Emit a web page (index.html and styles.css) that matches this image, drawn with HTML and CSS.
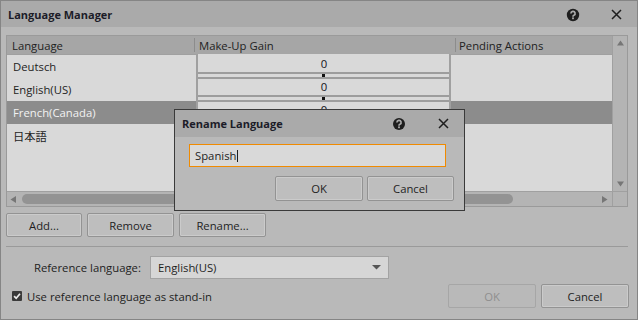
FILE: index.html
```html
<!DOCTYPE html>
<html>
<head>
<meta charset="utf-8">
<link rel="stylesheet" href="styles.css">
</head>
<body>
<div class="window">
  <div class="titlebar">
    <span class="title">Language Manager</span>
    <svg class="ico-help" width="14" height="14" viewBox="0 0 14 14"><circle cx="7" cy="7" r="6.2" fill="#1e1e1e"/><path d="M4.9 5.4a2.1 2.1 0 1 1 3 1.9c-.7.3-.9.7-.9 1.4" stroke="#aaaaaa" stroke-width="1.7" fill="none"/><rect x="6.1" y="9.4" width="1.8" height="1.8" fill="#aaaaaa"/></svg>
    <svg class="ico-close" width="11" height="11" viewBox="0 0 11 11"><path d="M1 1L10 10M10 1L1 10" stroke="#1e1e1e" stroke-width="1.5"/></svg>
  </div>
  <div class="content">
    <div class="frame">
      <div class="main">
        <div class="thead">
          <div class="th th1">Language</div>
          <div class="vsep"></div>
          <div class="th th2">Make-Up Gain</div>
          <div class="vsep"></div>
          <div class="th th3">Pending Actions</div>
        </div>
        <div class="tbody">
          <div class="col col1">
            <div class="row">Deutsch</div>
            <div class="row">English(US)</div>
            <div class="row sel">French(Canada)</div>
            <div class="row">日本語</div>
          </div>
          <div class="col col2">
            <div class="gain"><div class="gain-val">0</div><div class="gain-track"><div class="handle"></div></div></div>
            <div class="gain"><div class="gain-val">0</div><div class="gain-track"><div class="handle"></div></div></div>
            <div class="gain"><div class="gain-val">0</div><div class="gain-track"><div class="handle"></div></div></div>
            <div class="gain"><div class="gain-val">0</div><div class="gain-track"><div class="handle"></div></div></div>
          </div>
          <div class="col col3">
            <div class="row"></div>
            <div class="row"></div>
            <div class="row sel"></div>
            <div class="row"></div>
          </div>
        </div>
      </div>
      <div class="vscroll">
        <svg width="7" height="6" viewBox="0 0 7 6"><path d="M3.5 0.5L7 5.5H0Z" fill="#767676"/></svg>
        <svg width="7" height="6" viewBox="0 0 7 6"><path d="M0 0.5H7L3.5 5.5Z" fill="#767676"/></svg>
      </div>
      <div class="hscroll">
        <svg width="7" height="7" viewBox="0 0 7 7"><path d="M0.5 3.5L6 0V7Z" fill="#767676"/></svg>
        <div class="thumb"></div>
        <svg class="rarrow" width="7" height="7" viewBox="0 0 7 7"><path d="M6.5 3.5L1 0V7Z" fill="#767676"/></svg>
      </div>
      <div class="corner"></div>
    </div>
    <div class="btnrow">
      <div class="btn w76">Add...</div>
      <div class="btn w87">Remove</div>
      <div class="btn w87">Rename...</div>
    </div>
    <div class="hr"></div>
    <div class="refrow">
      <div class="reflabel">Reference language:</div>
      <div class="combo"><span>English(US)</span><svg width="9" height="5" viewBox="0 0 9 5"><path d="M0 0H9L4.5 4.5Z" fill="#555"/></svg></div>
    </div>
    <div class="botrow">
      <div class="chk">
        <svg class="chkbox" width="10" height="10" viewBox="0 0 10 10"><rect width="10" height="10" rx="1" fill="#3a3a3a"/><path d="M2.1 5.1L4.2 7.3 8 2.7" stroke="#ececec" stroke-width="1.7" fill="none"/></svg>
        <span>Use reference language as stand-in</span>
      </div>
      <div class="spacer"></div>
      <div class="btn w88 disabled">OK</div>
      <div class="btn w88">Cancel</div>
    </div>
  </div>

  <div class="dialog">
    <div class="dtitle">
      <span class="title">Rename Language</span>
      <svg class="ico-help" width="14" height="14" viewBox="0 0 14 14"><circle cx="7" cy="7" r="6" fill="#1e1e1e"/><path d="M4.9 5.4a2.1 2.1 0 1 1 3 1.9c-.7.3-.9.7-.9 1.4" stroke="#aaaaaa" stroke-width="1.7" fill="none"/><rect x="6.1" y="9.4" width="1.8" height="1.8" fill="#aaaaaa"/></svg>
      <svg class="ico-close" width="11" height="11" viewBox="0 0 11 11"><path d="M1 1L10 10M10 1L1 10" stroke="#1e1e1e" stroke-width="1.5"/></svg>
    </div>
    <div class="dbody">
      <div class="input"><span>Spanish</span><span class="caret"></span></div>
      <div class="dbtns">
        <div class="btn w88 h25">OK</div>
        <div class="btn w87 h25">Cancel</div>
      </div>
    </div>
  </div>
</div>
</body>
</html>
```
FILE: styles.css
```css
* { box-sizing: border-box; margin: 0; padding: 0; }
html, body { width: 638px; height: 320px; overflow: hidden; }
body {
  font-family: "Open Sans", "Noto Sans", "Noto Sans CJK JP", sans-serif;
  font-size: 11.3px;
  color: #1e1e1e;
  background: #b9b9b9;
}
.window {
  position: relative;
  width: 638px;
  height: 320px;
  border: 1px solid #858585;
  background: #b9b9b9;
  display: flex;
  flex-direction: column;
}
.titlebar {
  height: 26px;
  background: #aaaaaa;
  display: flex;
  align-items: center;
  padding: 1px 15px 0 7px;
}
.title { font-weight: 700; font-size: 11px; color: #1c1c28; flex: 1; }
.ico-help { display: block; margin-right: 31px; }
.ico-close { display: block; }

.content { padding: 8px 9px 0 5px; display: flex; flex-direction: column; }

.frame {
  height: 172px;
  border: 1px solid #9a9a9a;
  display: grid;
  grid-template-columns: 605px 15px;
  grid-template-rows: 155px 15px;
}
.main { display: flex; flex-direction: column; background: #a0a0a0; overflow: hidden; }
.thead { height: 18px; background: #a6a6a6; display: flex; align-items: center; }
.th { height: 100%; display: flex; align-items: center; color: #222; }
.th1 { width: 187px; padding-left: 5px; }
.th2 { width: 260px; padding-left: 4px; }
.th3 { flex: 1; padding-left: 3px; }
.vsep { width: 1px; height: 14px; background: #8c8c8c; }

.tbody { flex: 1; display: flex; gap: 2px; }
.col { background: #d9d9d9; }
.col1 { width: 189px; border-top: 1px solid #a0a0a0; }
.col2 { width: 251px; padding-top: 2px; }
.col3 { flex: 1; border-top: 1px solid #a0a0a0; }
.row { height: 23px; display: flex; align-items: center; padding-left: 6px; }
.row.sel { background: #8c8c8c; color: #f2f2f2; }
.gain { height: 23px; display: flex; flex-direction: column; }
.gain-val { height: 16px; line-height: 16px; text-align: center; padding-left: 1px; color: #141420; }
.gain-track {
  height: 7px;
  border-top: 2px solid #9d9d9d;
  border-bottom: 2px solid #9d9d9d;
  display: flex;
  justify-content: center;
}
.handle { width: 3px; height: 3px; background: #111; }

.vscroll {
  background: #b4b4b4;
  border-left: 1px solid #a0a0a0;
  display: flex;
  flex-direction: column;
  justify-content: space-between;
  align-items: center;
  padding: 4px 0 4px 0;
}
.hscroll {
  background: #b4b4b4;
  border-top: 1px solid #a0a0a0;
  display: flex;
  align-items: center;
  padding: 0 4px 0 3px;
}
.thumb { width: 491px; height: 10px; border-radius: 5px; background: #939393; margin-left: 5px; }
.rarrow { margin-left: auto; }
.corner { background: #b4b4b4; border-top: 1px solid #a0a0a0; border-left: 1px solid #a0a0a0; }

.btn {
  height: 24px;
  border: 1px solid #939393;
  border-radius: 2px;
  background: #bebebe;
  box-shadow: inset 0 0 0 1px #cbcbcb;
  display: flex;
  align-items: center;
  justify-content: center;
  color: #1e1e1e;
}
.w76 { width: 76px; }
.w87 { width: 87px; }
.w88 { width: 88px; }
.h25 { height: 25px; }
.btn.disabled { color: #8f8f8f; border-color: #a6a6a6; box-shadow: none; background: #b9b9b9; }

.btnrow { display: flex; gap: 5px; margin-top: 6px; }
.hr { height: 1px; background: #9a9a9a; margin-top: 9px; width: 622px; }
.refrow { display: flex; align-items: center; height: 23px; margin-top: 9px; }
.reflabel { width: 144px; padding-left: 28px; }
.combo {
  width: 239px;
  height: 23px;
  background: #d6d6d6;
  border: 1px solid #a3a3a3;
  display: flex;
  align-items: center;
  justify-content: space-between;
  padding: 0 7px;
}
.botrow { display: flex; align-items: center; height: 24px; margin-top: 5px; margin-right: -1px; gap: 5px; }
.chk { display: flex; align-items: center; gap: 5px; margin-left: 6px; }
.chkbox { display: block; margin-bottom: 1px; }
.spacer { flex: 1; }

.dialog {
  position: absolute;
  left: 173px;
  top: 108px;
  width: 291px;
  height: 102px;
  border: 1px solid #3a3a3a;
  background: #b9b9b9;
  display: flex;
  flex-direction: column;
}
.dtitle {
  height: 27px;
  background: #aaaaaa;
  display: flex;
  align-items: center;
  padding: 0 15px 0 7px;
}
.dialog .ico-help { margin-right: 32px; }
.dbody { padding: 7px 10px 0 14px; }
.input {
  width: 257px;
  height: 23px;
  border: 1px solid #f08a00;
  background: #d9d9d9;
  display: flex;
  align-items: center;
  padding-left: 5px;
}
.caret { width: 1px; height: 12px; background: #1e1e1e; margin-left: 1px; }
.dbtns { display: flex; justify-content: flex-end; gap: 4px; margin-top: 9px; }
```
